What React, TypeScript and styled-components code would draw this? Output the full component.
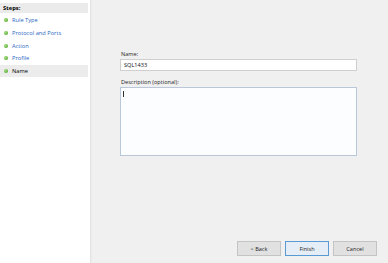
import React from "react";
import styled, { createGlobalStyle } from "styled-components";

const Global = createGlobalStyle`
  html, body { margin: 0; padding: 0; background: #f0f0f0; }
  body { font-family: "Open Sans", "Noto Sans", "Liberation Sans", sans-serif; }
`;

const Window = styled.div`
  width: 388px;
  height: 263px;
  display: flex;
  background: #f0f0f0;
  overflow: hidden;
`;

const Sidebar = styled.div`
  width: 90px;
  flex: none;
  background: #ffffff;
  padding-top: 3px;
  box-sizing: border-box;
  box-shadow: 1px 0 0 #e4e4e4, 2px 0 1px #ebebeb;
  display: flex;
  flex-direction: column;
`;

const StepsHeader = styled.div`
  height: 10px;
  width: 88px;
  background: #ebebeb;
  font-size: 5.8px;
  font-weight: 700;
  color: #000;
  line-height: 10px;
  padding-left: 3px;
  box-sizing: border-box;
  margin-bottom: 1px;
`;

const StepList = styled.div`
  display: flex;
  flex-direction: column;
`;

const Step = styled.div<{ $active?: boolean }>`
  height: 12.7px;
  width: 88px;
  display: flex;
  align-items: center;
  gap: 4px;
  padding-left: 4px;
  box-sizing: border-box;
  background: ${(p) => (p.$active ? "#ececec" : "transparent")};
  color: ${(p) => (p.$active ? "#000" : "#2a66c4")};
  font-size: 5.7px;
`;

const Dot = styled.span`
  width: 4px;
  height: 4px;
  border-radius: 50%;
  background: radial-gradient(circle at 35% 35%, #a6e07a, #3f9b1f);
  flex: none;
`;

const Main = styled.div`
  flex: 1;
  display: flex;
  flex-direction: column;
  padding: 50px 30px 7px 30px;
  box-sizing: border-box;
`;

const Form = styled.div`
  display: flex;
  flex-direction: column;
  width: 237px;
`;

const Label = styled.div`
  font-size: 5.6px;
  color: #1e1e1e;
  line-height: 8px;
  height: 8px;
  margin-bottom: 1px;
  padding-left: 1px;
`;

const TextInput = styled.div`
  height: 12px;
  box-sizing: border-box;
  background: #fff;
  border: 1px solid #cfcfcf;
  font-size: 5.6px;
  color: #111;
  line-height: 10px;
  padding-left: 3px;
  margin-bottom: 7px;
`;

const TextArea = styled.div`
  height: 69px;
  box-sizing: border-box;
  background: #fbfdff;
  border: 1px solid #b9c7d8;
  position: relative;
`;

const Caret = styled.span`
  position: absolute;
  left: 2px;
  top: 3px;
  width: 1px;
  height: 6px;
  background: #333;
`;

const Spacer = styled.div`
  flex: 1;
`;

const ButtonRow = styled.div`
  display: flex;
  justify-content: flex-end;
  gap: 4px;
  margin-right: -19px;
`;

const Button = styled.div<{ $primary?: boolean }>`
  width: 44px;
  height: 15px;
  box-sizing: border-box;
  background: ${(p) => (p.$primary ? "#e5eef7" : "#e1e1e1")};
  border: 1px solid ${(p) => (p.$primary ? "#5b9bd5" : "#c4c4c4")};
  font-size: 5.6px;
  color: #222;
  display: flex;
  align-items: center;
  justify-content: center;
`;

const steps = ["Rule Type", "Protocol and Ports", "Action", "Profile", "Name"];

export default function App() {
  return (
    <>
      <Global />
      <Window>
        <Sidebar>
          <StepsHeader>Steps:</StepsHeader>
          <StepList>
            {steps.map((s) => (
              <Step key={s} $active={s === "Name"}>
                <Dot />
                {s}
              </Step>
            ))}
          </StepList>
        </Sidebar>
        <Main>
          <Form>
            <Label>Name:</Label>
            <TextInput>SQL1433</TextInput>
            <Label>Description (optional):</Label>
            <TextArea>
              <Caret />
            </TextArea>
          </Form>
          <Spacer />
          <ButtonRow>
            <Button>&lt; Back</Button>
            <Button $primary>Finish</Button>
            <Button>Cancel</Button>
          </ButtonRow>
        </Main>
      </Window>
    </>
  );
}
